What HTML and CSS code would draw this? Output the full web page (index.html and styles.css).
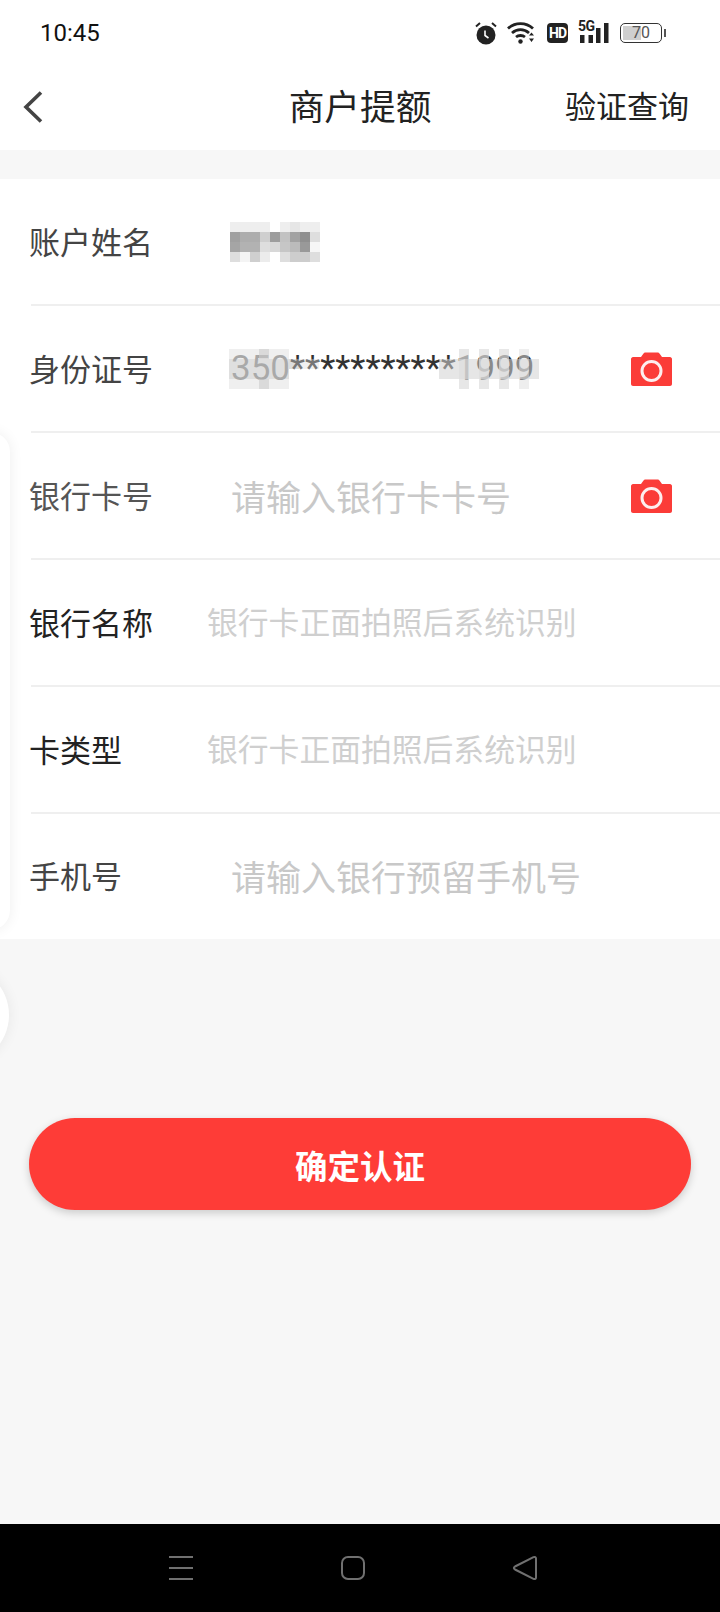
FILE: index.html
```html
<!DOCTYPE html>
<html lang="zh-CN">
<head>
    <meta charset="UTF-8">
    <meta name="viewport" content="width=device-width, initial-scale=1.0">
    <title>商户提额</title>
    <link rel="stylesheet" href="styles.css">
</head>
<body>
    <div class="phone">
        <div class="status-bar">
            <span class="time">10:45</span>
            <div class="status-icons">
                <svg class="icon-alarm" width="22" height="24" viewBox="0 0 22 24">
                    <circle cx="11" cy="14" r="9.5" fill="#222"/>
                    <path d="M1 5.5 5 2M21 5.5 17 2" stroke="#222" stroke-width="2" fill="none"/>
                    <path d="M10 9.5V14.5L13.5 17" stroke="#fff" stroke-width="1.6" fill="none"/>
                </svg>
                <svg class="icon-wifi" width="30" height="23" viewBox="0 0 30 23">
                    <path d="M1 7.5C8 1 19 1 26 7.5M5 12C10 7.5 17 7.5 22 12M9 16C11.500 14 15.500 14 18 16" stroke="#222" stroke-width="2.800" fill="none"/>
                    <circle cx="13.500" cy="20.500" r="2.200" fill="#222"/>
                    <path d="M24.500 11.500 27 14.500H22ZM24.500 21 27 17.500H22Z" fill="#222"/>
                </svg>
                <span class="badge-hd">HD</span>
                <div class="signal">
                    <span class="signal-label">5G</span>
                    <svg width="32" height="23" viewBox="0 0 32 23">
                        <path d="M2 14h4.500v8H2zM10.500 14h4.500v8h-4.500z" fill="#222"/>
                        <path d="M18 7h4.500v15H18zM26 2h4.500v20H26z" fill="#222"/>
                    </svg>
                </div>
                <div class="battery">
                    <div class="battery-body">
                        <span class="battery-fill"></span>
                        <span class="battery-num">70</span>
                    </div>
                    <span class="battery-tip"></span>
                </div>
            </div>
        </div>

        <div class="nav-bar">
            <svg class="back" width="22" height="34" viewBox="0 0 22 34">
                <path d="M19 2.500 4 17 19 31.500" stroke="#444" stroke-width="3.600" fill="none"/>
            </svg>
            <h1 class="nav-title">商户提额</h1>
            <span class="nav-action">验证查询</span>
        </div>

        <div class="form">
            <div class="row">
                <span class="label">账户姓名</span>
                <svg class="mosaic-name" width="90" height="40" viewBox="0 0 90 40" shape-rendering="crispEdges">
                    <rect x="0" y="0" width="90" height="10" fill="#eeeeee"/>
                    <rect x="40" y="0" width="10" height="10" fill="#fff"/>
                    <rect x="60" y="0" width="10" height="10" fill="#e6e6e6"/>
                    <rect x="0" y="10" width="10" height="10" fill="#a0a0a0"/>
                    <rect x="10" y="10" width="20" height="10" fill="#adadad"/>
                    <rect x="30" y="10" width="10" height="10" fill="#cfcfcf"/>
                    <rect x="40" y="10" width="10" height="10" fill="#9d9d9d"/>
                    <rect x="50" y="10" width="10" height="10" fill="#c2c2c2"/>
                    <rect x="60" y="10" width="10" height="10" fill="#a2a2a2"/>
                    <rect x="70" y="10" width="10" height="10" fill="#8f8f8f"/>
                    <rect x="80" y="10" width="10" height="10" fill="#dedede"/>
                    <rect x="0" y="20" width="10" height="10" fill="#a5a5a5"/>
                    <rect x="10" y="20" width="20" height="10" fill="#b2b2b2"/>
                    <rect x="30" y="20" width="10" height="10" fill="#dedede"/>
                    <rect x="40" y="20" width="10" height="10" fill="#d8d8d8"/>
                    <rect x="50" y="20" width="10" height="10" fill="#c6c6c6"/>
                    <rect x="60" y="20" width="10" height="10" fill="#bbb"/>
                    <rect x="70" y="20" width="10" height="10" fill="#999"/>
                    <rect x="80" y="20" width="10" height="10" fill="#f6f6f6"/>
                    <rect x="0" y="30" width="10" height="10" fill="#dedede"/>
                    <rect x="10" y="30" width="10" height="10" fill="#f4f4f4"/>
                    <rect x="20" y="30" width="10" height="10" fill="#cfcfcf"/>
                    <rect x="30" y="30" width="10" height="10" fill="#ececec"/>
                    <rect x="50" y="30" width="10" height="10" fill="#dedede"/>
                    <rect x="60" y="30" width="20" height="10" fill="#cdcdcd"/>
                    <rect x="80" y="30" width="10" height="10" fill="#dedede"/>
                </svg>
            </div>
            <div class="row">
                <span class="label">身份证号</span>
                <div class="id-value">
                    <span class="id-text">350***********1999</span>
                    <svg class="id-mosaic" width="310" height="40" viewBox="0 0 310 40" shape-rendering="crispEdges">
                        <rect x="0" y="0" width="60" height="40" fill="#e6e6e6" fill-opacity=".65"/>
                        <rect x="0" y="10" width="60" height="20" fill="#b0b0b0" fill-opacity=".25"/>
                        <rect x="30" y="0" width="10" height="10" fill="#ccc" fill-opacity=".6"/>
                        <rect x="30" y="30" width="10" height="10" fill="#ccc" fill-opacity=".6"/>
                        <rect x="60" y="10" width="10" height="10" fill="#bbb" fill-opacity=".5"/>
                        <rect x="70" y="10" width="20" height="10" fill="#ddd" fill-opacity=".4"/>
                        <rect x="210" y="10" width="100" height="20" fill="#d2d2d2" fill-opacity=".55"/>
                        <rect x="230" y="0" width="10" height="40" fill="#ddd" fill-opacity=".7"/>
                        <rect x="250" y="0" width="10" height="40" fill="#ddd" fill-opacity=".7"/>
                        <rect x="270" y="0" width="10" height="40" fill="#ddd" fill-opacity=".7"/>
                        <rect x="290" y="0" width="10" height="40" fill="#ddd" fill-opacity=".5"/>
                    </svg>
                </div>
                <svg class="camera" width="41" height="34" viewBox="0 0 41 34">
                    <path d="M2 5H10L12.500 1.500C13 1 13.500 .5 14.500 .5H26.500C27.500 .5 28 1 28.500 1.500L31 5H39C40 5 41 6 41 7V32C41 33 40 34 39 34H2C1 34 0 33 0 32V7C0 6 1 5 2 5Z" fill="#fb3c38"/>
                    <circle cx="20.500" cy="19" r="9.500" fill="none" stroke="#fdeeee" stroke-width="3"/>
                </svg>
            </div>
            <div class="row">
                <span class="label label-muted">银行卡号</span>
                <span class="placeholder">请输入银行卡卡号</span>
                <svg class="camera" width="41" height="34" viewBox="0 0 41 34">
                    <path d="M2 5H10L12.500 1.500C13 1 13.500 .5 14.500 .5H26.500C27.500 .5 28 1 28.500 1.500L31 5H39C40 5 41 6 41 7V32C41 33 40 34 39 34H2C1 34 0 33 0 32V7C0 6 1 5 2 5Z" fill="#fb3c38"/>
                    <circle cx="20.500" cy="19" r="9.500" fill="none" stroke="#fdeeee" stroke-width="3"/>
                </svg>
            </div>
            <div class="row">
                <span class="label label-dark label-short">银行名称</span>
                <span class="placeholder placeholder-small">银行卡正面拍照后系统识别</span>
            </div>
            <div class="row">
                <span class="label label-dark label-short">卡类型</span>
                <span class="placeholder placeholder-small">银行卡正面拍照后系统识别</span>
            </div>
            <div class="row row-last">
                <span class="label">手机号</span>
                <span class="placeholder">请输入银行预留手机号</span>
            </div>
        </div>

        <div class="actions">
            <button class="submit">确定认证</button>
        </div>

        <div class="sys-nav">
            <svg width="26" height="26" viewBox="0 0 26 26">
                <path d="M1 2H25M1 13H25M1 24H25" stroke="#707070" stroke-width="2" fill="none"/>
            </svg>
            <svg width="26" height="26" viewBox="0 0 26 26">
                <rect x="2" y="2" width="22" height="22" rx="6" stroke="#707070" stroke-width="2" fill="none"/>
            </svg>
            <svg width="26" height="26" viewBox="0 0 26 26">
                <path d="M24 3.500V22.500C24 24 23 24.500 21.500 23.800L3 14.500C1.500 13.600 1.500 12.400 3 11.500L21.500 2.200C23 1.500 24 2 24 3.500Z" stroke="#707070" stroke-width="2" fill="none"/>
            </svg>
        </div>

        <div class="float-panel"></div>
        <div class="float-ball"></div>
    </div>
</body>
</html>
```

FILE: styles.css
```css
* { box-sizing: border-box; }
html, body { margin: 0; padding: 0; }
body { font-family: "Noto Sans CJK SC", "Noto Sans", sans-serif; background: #f7f7f7; }

.phone { position: relative; width: 720px; height: 1612px; overflow: hidden; display: flex; flex-direction: column; background: #f7f7f7; }

.status-bar { height: 62px; background: #fff; display: flex; align-items: center; justify-content: space-between; padding: 3px 54px 0 40px; }
.time { font-family: Roboto, sans-serif; font-size: 24px; color: #111; }
.status-icons { display: flex; align-items: center; gap: 10px; }
.badge-hd { width: 21px; height: 20px; border-radius: 4px; background: #222; color: #fff; font-family: Roboto, sans-serif; font-size: 14px; font-weight: 700; line-height: 20px; text-align: center; letter-spacing: -1px; }
.signal { position: relative; width: 32px; height: 23px; }
.signal-label { position: absolute; top: -2px; left: 0; font-family: Roboto, sans-serif; font-size: 14px; font-weight: 700; line-height: 14px; color: #222; letter-spacing: -.5px; }
.signal svg { display: block; }
.battery { display: flex; align-items: center; gap: 2px; }
.battery-body { position: relative; width: 42px; height: 20px; border: 1.500px solid #333; border-radius: 5px; overflow: hidden; }
.battery-fill { position: absolute; left: 2px; top: 2px; bottom: 2px; width: 18px; background: #cfcfcf; }
.battery-num { position: absolute; inset: 0; font-family: Roboto, sans-serif; font-size: 16px; line-height: 17px; text-align: center; color: #555; }
.battery-tip { width: 2px; height: 8px; background: #555; }

.nav-bar { position: relative; height: 88px; background: #fff; display: flex; align-items: center; justify-content: center; }
.back { position: absolute; left: 22px; top: 28px; }
.nav-title { margin: 0; font-size: 35.700px; font-weight: 400; color: #222; line-height: 1; position: relative; top: -1px; }
.nav-action { position: absolute; right: 31px; top: 23px; font-size: 31px; color: #222; line-height: 1.300; }

.form { margin-top: 29px; background: #fff; padding-left: 31px; display: flex; flex-direction: column; height: 760px; }
.row { flex: none; height: 127px; display: flex; align-items: center; border-bottom: 2px solid #efefef; padding-right: 48px; }
.row-last { height: 125px; padding-bottom: 2px; border-bottom: 0; }
.label { flex: 0 0 202px; font-size: 31px; color: #444; line-height: 1; margin: 0 0 2px -2px; }
.label-muted { color: #555; }
.label-dark { color: #222; }
.label-short { flex-basis: 178px; }
.placeholder { flex: 1; font-size: 35px; color: #c8c8c8; line-height: 1; }
.placeholder-small { font-size: 30.800px; color: #cfcfcf; margin-bottom: 2px; }

.mosaic-name { display: block; margin-left: -1px; }
.id-value { position: relative; flex: 1; height: 40px; }
.id-text { display: block; font-family: Roboto, sans-serif; font-size: 35px; line-height: 40px; color: #333; white-space: nowrap; }
.id-mosaic { position: absolute; left: -2px; top: 0; }

.actions { padding: 179px 29px 0; }
.submit { display: block; width: 662px; height: 92px; border: 0; border-radius: 46px; background: #fe3c37; color: #fff; font-family: inherit; font-size: 32.500px; font-weight: 700; box-shadow: 0 3px 8px rgba(0, 0, 0, .18); }

.sys-nav { position: absolute; left: 0; right: 0; bottom: 0; height: 88px; background: #000; display: flex; align-items: center; justify-content: space-between; padding: 0 182px 0 168px; }

.float-panel { position: absolute; left: -30px; top: 432px; width: 40px; height: 498px; background: #fff; border-radius: 24px; box-shadow: 0 0 14px rgba(0, 0, 0, .07); }
.float-ball { position: absolute; left: -91px; top: 965px; width: 100px; height: 100px; background: #fff; border-radius: 50%; box-shadow: 0 0 14px rgba(0, 0, 0, .07); }
```
